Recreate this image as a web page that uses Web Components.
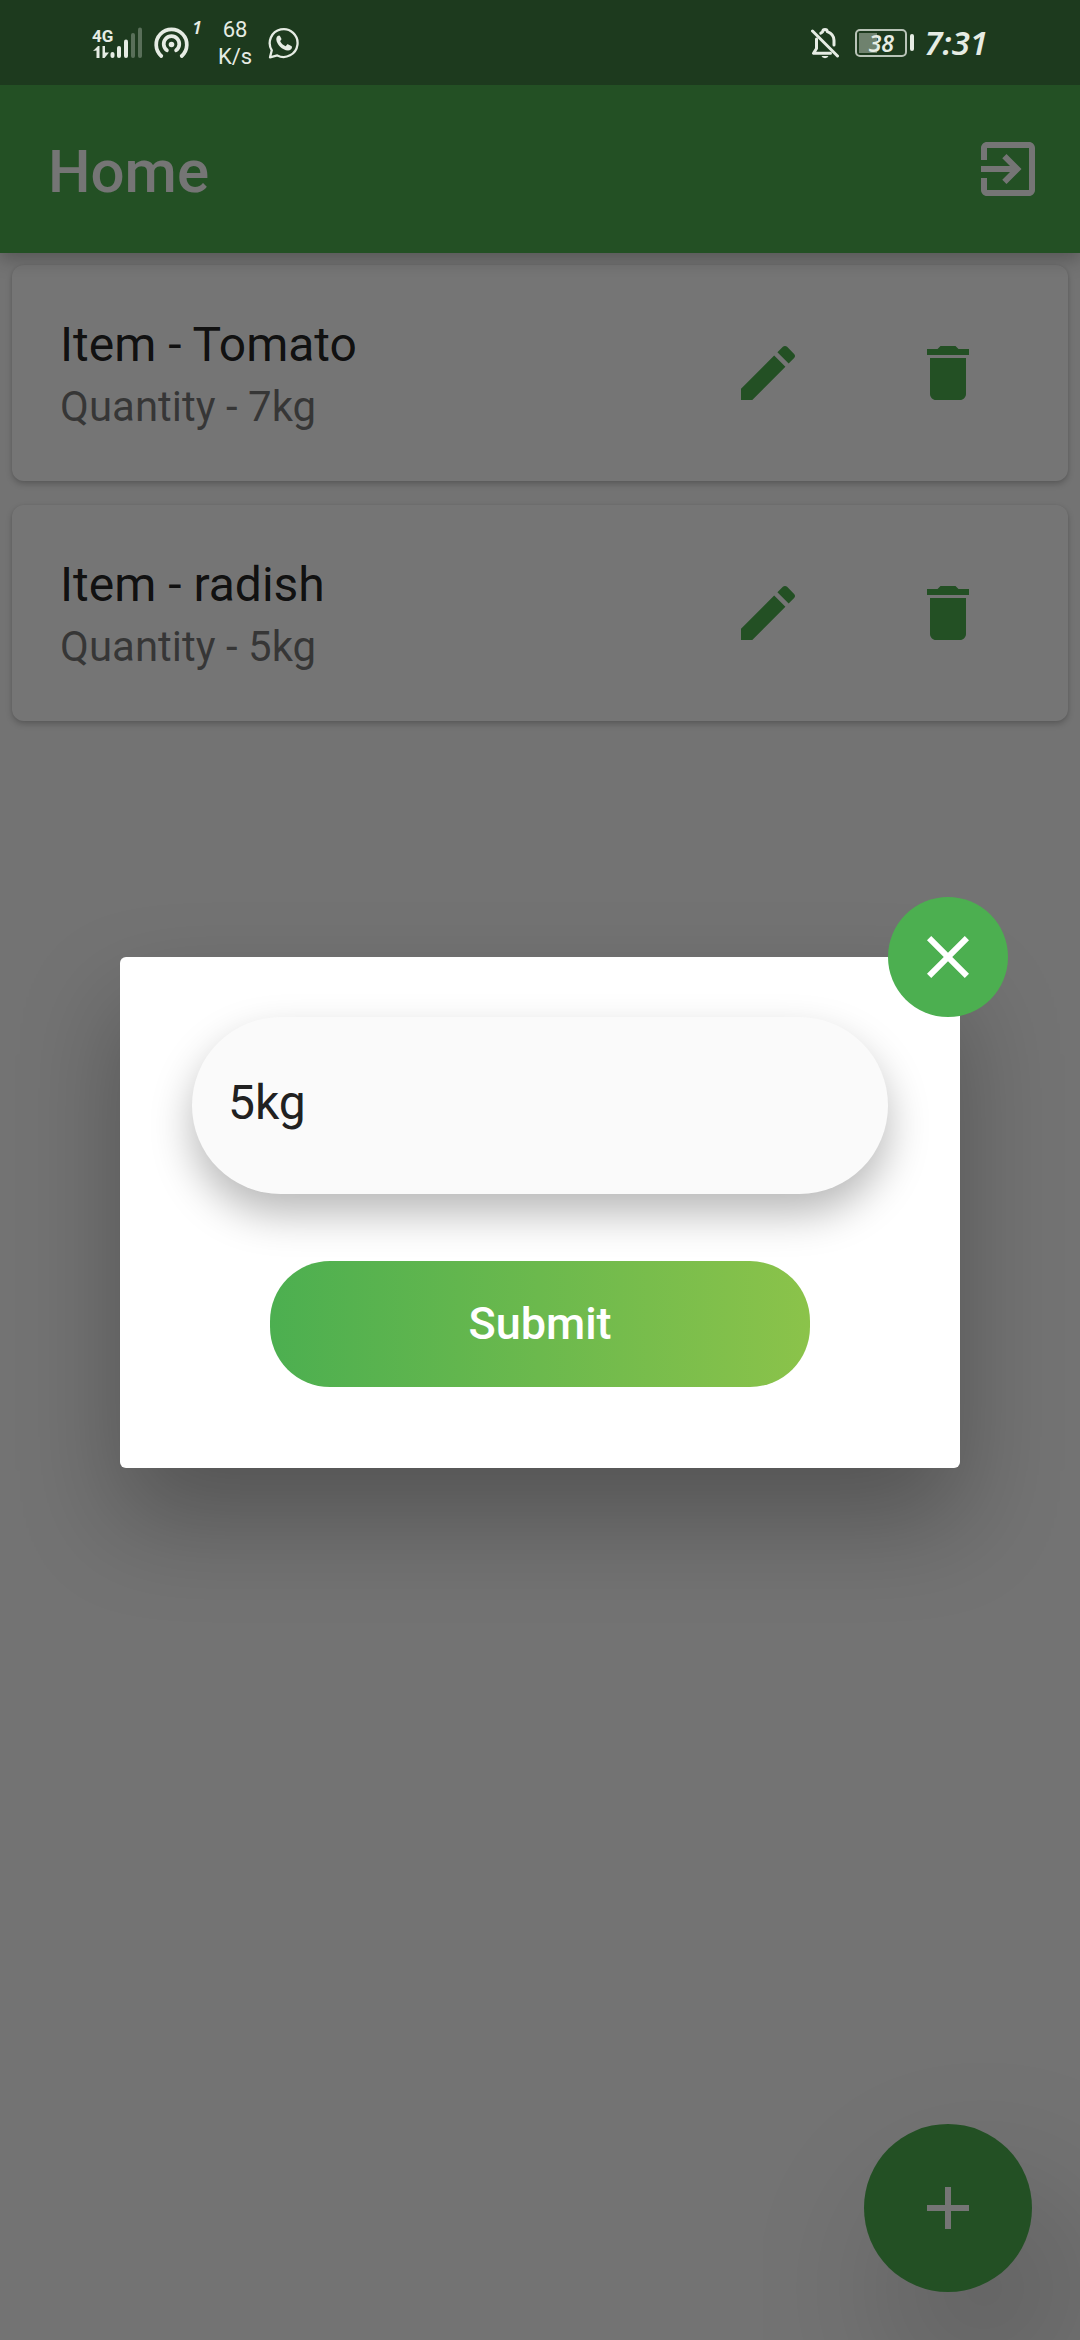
<!DOCTYPE html>
<html lang="en">
<head>
<meta charset="utf-8">
<meta name="viewport" content="width=device-width, initial-scale=1">
<title>Home</title>
<style>
  html, body { margin: 0; height: 100%; }
  body {
    font-family: Roboto, "Noto Sans", sans-serif;
    background: #fafafa;
    --green: #4caf50;
    --lime: #8bc34a;
    --status-height: 85px;
  }
</style>
</head>
<body>
<app-shell>
  <status-bar slot="status"></status-bar>
  <app-bar slot="header">Home</app-bar>
  <item-card><span slot="title">Item - Tomato</span><span slot="subtitle">Quantity - 7kg</span></item-card>
  <item-card><span slot="title">Item - radish</span><span slot="subtitle">Quantity - 5kg</span></item-card>
  <add-button slot="fab"></add-button>
  <quantity-dialog slot="dialog" value="5kg">Submit</quantity-dialog>
</app-shell>

<script>
class BaseElement extends HTMLElement {
  constructor() {
    super();
    this.attachShadow({ mode: "open" }).innerHTML = this.render();
  }
  render() { return ""; }
}

const GLYPHS = {
  exit: "M10.09 15.59L11.5 17l5-5-5-5-1.41 1.41L12.67 11H3v2h9.67l-2.58 2.59zM19 3H5c-1.11 0-2 .9-2 2v4h2V5h14v14H5v-4H3v4c0 1.1.89 2 2 2h14c1.1 0 2-.9 2-2V5c0-1.1-.9-2-2-2z",
  edit: "M3 17.25V21h3.75L17.81 9.94l-3.75-3.75L3 17.25zM20.71 7.04c.39-.39.39-1.02 0-1.41l-2.34-2.34c-.39-.39-1.02-.39-1.41 0l-1.83 1.83 3.75 3.75 1.83-1.83z",
  trash: "M6 19c0 1.1.9 2 2 2h8c1.1 0 2-.9 2-2V7H6v12zM19 4h-3.5l-1-1h-5l-1 1H5v2h14V4z",
  close: "M19 6.41L17.59 5 12 10.59 6.41 5 5 6.41 10.59 12 5 17.59 6.41 19 12 13.41 17.59 19 19 17.59 13.41 12z",
  add: "M19 13h-6v6h-2v-6H5v-2h6V5h2v6h6v2z"
};

customElements.define("md-icon", class extends HTMLElement {
  connectedCallback() {
    if (!this.shadowRoot) this.attachShadow({ mode: "open" });
    this.shadowRoot.innerHTML = `
      <style>
        :host { display: block; width: 72px; height: 72px; }
        svg { display: block; width: 100%; height: 100%; fill: currentColor; }
      </style>
      <svg viewBox="0 0 24 24" aria-hidden="true"><path d="${GLYPHS[this.getAttribute("name")]}"/></svg>`;
  }
});

customElements.define("app-shell", class extends BaseElement {
  render() {
    return `
      <style>
        :host { display: flex; flex-direction: column; min-height: 100vh; position: relative; }
        header { position: relative; z-index: 1; }
        main { flex: 1; display: flex; flex-direction: column; gap: 24px; padding: 12px; }
      </style>
      <slot name="status"></slot>
      <header><slot name="header"></slot></header>
      <main><slot></slot></main>
      <slot name="fab"></slot>
      <slot name="dialog"></slot>`;
  }
});

customElements.define("status-bar", class extends BaseElement {
  render() {
    return `
      <style>
        :host {
          position: relative; z-index: 3;
          display: flex; justify-content: space-between; align-items: center;
          height: var(--status-height); box-sizing: border-box; padding: 0 92px;
          background: #1d3a1e; color: #e6ece4;
        }
        .group, .net { display: flex; align-items: center; }
        .group { gap: 16px; }
        .net { gap: 10px; }
        .spot { display: flex; align-items: flex-start; }
        .count { font: italic 600 18px/18px "Noto Sans", sans-serif; margin-top: -8px; }
        .speed { font-size: 22px; line-height: 27px; text-align: center; }
        .clock { font: italic 600 33px/40px "Noto Sans", sans-serif; }
        .battery { display: flex; align-items: center; gap: 3px; }
        .cell {
          box-sizing: border-box; width: 52px; height: 28px;
          border: 2px solid #b9c4b8; border-radius: 5px;
          background: linear-gradient(#6f826e, #6f826e) 2px 2px / 18px 20px no-repeat;
          font: italic 600 23px/24px "Noto Sans", sans-serif; text-align: center;
        }
        .nub { width: 4px; height: 17px; border-radius: 2px; background: currentColor; }
        svg { display: block; }
      </style>
      <div class="group">
        <div class="net">
          <svg width="52" height="34" viewBox="0 0 52 34" fill="currentColor">
            <text x="0" y="16" font-family="Roboto, sans-serif" font-weight="700" font-size="17">4G</text>
            <path d="M1 25l5-5h1.500v12h-3v-7.500zM10.500 20h2.500v6.500h4l-4.500 5.500h-2z"/>
            <rect x="18.500" y="26" width="4" height="6" rx="2"/>
            <rect x="25" y="20" width="4" height="12" rx="2"/>
            <rect x="32" y="13.500" width="4" height="18.500" rx="2"/>
            <rect x="39" y="7" width="4" height="25" rx="2" opacity=".3"/>
            <rect x="46" y="1.500" width="4" height="30.500" rx="2" opacity=".3"/>
          </svg>
          <div class="spot">
            <svg width="38" height="34" viewBox="0 0 38 34" fill="none" stroke="currentColor" stroke-width="3.700" stroke-linecap="round">
              <path d="M7.300 30a15.300 15.300 0 1 1 20.400 0"/>
              <path d="M12.900 24.300a7.800 7.800 0 1 1 9.200 0"/>
              <circle cx="17.500" cy="18.500" r="2.800" fill="currentColor" stroke="none"/>
            </svg>
            <span class="count">1</span>
          </div>
        </div>
        <div class="speed">68<br>K/s</div>
        <svg width="32" height="32" viewBox="0 0 32 32">
          <path d="M2 30.300l1.800-7A13.900 13.900 0 1 1 9.300 28.400z" fill="none" stroke="currentColor" stroke-width="2.300" stroke-linejoin="round"/>
          <path d="M10.500 8.700c-1 .2-2.300 1.500-2.200 3.600.2 5 6 11 11.700 11.300 2.200 0 4-1.500 4-3.300 0-.7-.2-1-.7-1.300l-3-1.500c-.6-.3-1-.2-1.400.3l-1.200 1.500c-2.600-1-4.400-2.800-5.600-5.200l1-1.200c.4-.5.4-.8.2-1.300l-1.200-2.400c-.3-.5-.7-.7-1.600-.5z" fill="currentColor"/>
        </svg>
      </div>
      <div class="group">
        <svg width="28" height="32" viewBox="0 0 28 32" fill="none" stroke="currentColor" stroke-width="3" stroke-linecap="round" stroke-linejoin="round">
          <path d="M5.500 12v9.500L2.500 26.200H19.500"/>
          <path d="M9.800 6.200c1-.8 1.500-1 1.800-1.500C12 1.800 16 1.800 16.400 4.700c5 2 6.600 4.500 6.600 8.800v4.500"/>
          <path d="M1.500 4L26.500 29"/>
          <path d="M10.500 29h7a3.600 2.800 0 0 1-7 0z" fill="currentColor" stroke="none"/>
        </svg>
        <div class="net">
          <div class="battery"><div class="cell">38</div><div class="nub"></div></div>
          <span class="clock">7:31</span>
        </div>
      </div>`;
  }
});

customElements.define("app-bar", class extends BaseElement {
  render() {
    return `
      <style>
        :host {
          display: flex; align-items: center; justify-content: space-between;
          height: 168px; padding-left: 48px;
          background: var(--green); color: #fff;
          box-shadow: 0 6px 18px rgba(0, 0, 0, .25);
        }
        h1 { margin: 0; padding-top: 6px; font-size: 60px; line-height: 70px; font-weight: 500; }
        button { border: 0; background: none; color: inherit; padding: 36px; }
      </style>
      <h1><slot></slot></h1>
      <button type="button" aria-label="Log out"><md-icon name="exit"></md-icon></button>`;
  }
});

customElements.define("item-card", class extends BaseElement {
  render() {
    return `
      <style>
        :host {
          display: flex; align-items: center; justify-content: space-between;
          box-sizing: border-box; height: 216px; padding: 0 48px; border-radius: 12px;
          background: #fff;
          box-shadow: 0 3px 6px rgba(0, 0, 0, .22), 0 0 3px rgba(0, 0, 0, .06);
        }
        .text { display: flex; flex-direction: column; gap: 9px; padding-top: 2px; }
        .title { font-size: 48px; line-height: 56px; color: rgba(0, 0, 0, .87); }
        .subtitle { font-size: 42px; line-height: 49px; color: rgba(0, 0, 0, .54); }
        .actions { display: flex; gap: 36px; }
        button { border: 0; background: none; color: var(--green); padding: 36px; }
      </style>
      <div class="text">
        <div class="title"><slot name="title"></slot></div>
        <div class="subtitle"><slot name="subtitle"></slot></div>
      </div>
      <div class="actions">
        <button type="button" aria-label="Edit"><md-icon name="edit"></md-icon></button>
        <button type="button" aria-label="Delete"><md-icon name="trash"></md-icon></button>
      </div>`;
  }
});

customElements.define("add-button", class extends BaseElement {
  render() {
    return `
      <style>
        :host { display: block; align-self: flex-end; margin: 0 48px 48px; }
        button {
          display: grid; place-items: center; width: 168px; height: 168px; padding: 0;
          border: 0; border-radius: 50%; background: var(--green); color: #fff;
          box-shadow: 36px 80px 140px 24px rgba(0, 0, 0, .15);
        }
      </style>
      <button type="button" aria-label="Add item"><md-icon name="add"></md-icon></button>`;
  }
});

customElements.define("quantity-dialog", class extends BaseElement {
  static observedAttributes = ["value"];
  attributeChangedCallback(name, old, value) {
    this.shadowRoot.querySelector("input").value = value;
  }
  render() {
    return `
      <style>
        :host {
          position: absolute; inset: var(--status-height) 0 0; z-index: 2;
          display: flex; align-items: center; justify-content: center;
          padding: 0 120px; background: rgba(0, 0, 0, .54);
        }
        form {
          position: relative; flex: 1; display: flex; flex-direction: column; align-items: center;
          gap: 67px; padding: 60px 72px 81px; border-radius: 6px; background: #fff;
          box-shadow: 0 50px 100px rgba(0, 0, 0, .27);
        }
        input {
          box-sizing: border-box; width: 100%; height: 177px; padding: 0 36px 6px;
          border: 0; border-radius: 90px; outline: 0; background: #fafafa;
          font: 48px/56px Roboto, sans-serif; color: #212121;
          box-shadow: 0 20px 42px rgba(0, 0, 0, .28);
        }
        .submit {
          width: 540px; max-width: 100%; height: 126px; padding: 0;
          border: 0; border-radius: 60px; color: #fff;
          background: linear-gradient(90deg, var(--green), var(--lime));
          font: 500 45px/52px Roboto, sans-serif;
        }
        .close {
          position: absolute; top: -60px; right: -48px;
          display: grid; place-items: center; width: 120px; height: 120px; padding: 0;
          border: 0; border-radius: 50%; background: var(--green); color: #fff;
        }
      </style>
      <form role="dialog" aria-label="Edit quantity">
        <input type="text" name="quantity" aria-label="Quantity">
        <button class="submit" type="button"><slot></slot></button>
        <button class="close" type="button" aria-label="Close"><md-icon name="close"></md-icon></button>
      </form>`;
  }
});
</script>
</body>
</html>
